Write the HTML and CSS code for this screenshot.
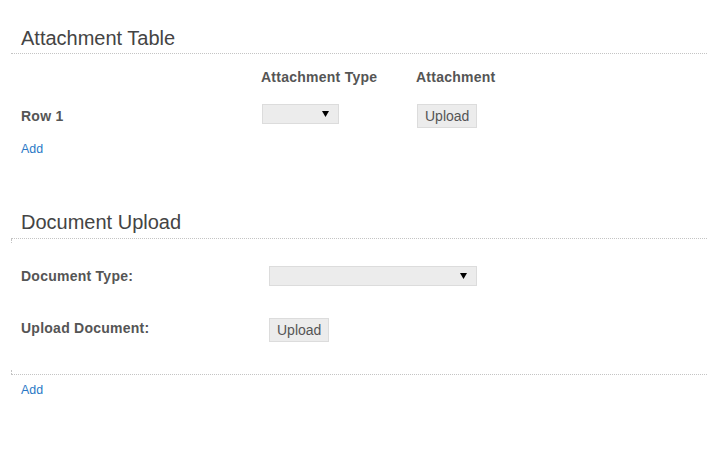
FILE: index.html
```html
<!DOCTYPE html>
<html>
<head>
<meta charset="utf-8">
<link rel="stylesheet" href="styles.css">
</head>
<body>
<div class="page">
  <section class="sec">
    <h2 class="sec-title first">Attachment Table</h2>
    <div class="att">
      <div class="att-row att-head">
        <div class="c-label"></div>
        <div class="c-type">Attachment Type</div>
        <div class="c-file">Attachment</div>
      </div>
      <div class="att-row">
        <div class="c-label">Row 1</div>
        <div class="c-type">
          <span class="sel sel-sm"><svg class="caret" width="7" height="6" viewBox="0 0 7 6"><path d="M0 0H7L3.5 6Z" fill="#000"/></svg></span>
        </div>
        <div class="c-file"><span class="btn">Upload</span></div>
      </div>
    </div>
    <a class="add add-1" href="#">Add</a>
  </section>

  <section class="sec">
    <h2 class="sec-title second">Document Upload</h2>
    <div class="doc">
      <div class="doc-row">
        <div class="doc-label">Document Type:</div>
        <span class="sel sel-lg"><svg class="caret" width="7" height="6" viewBox="0 0 7 6"><path d="M0 0H7L3.5 6Z" fill="#000"/></svg></span>
      </div>
      <div class="doc-row">
        <div class="doc-label">Upload Document:</div>
        <span class="btn">Upload</span>
      </div>
    </div>
    <a class="add add-2" href="#">Add</a>
  </section>
</div>
</body>
</html>
```

FILE: styles.css
```css
html, body {
  margin: 0;
  padding: 0;
  background: #fff;
}
body {
  font-family: "Liberation Sans", Arial, sans-serif;
  color: #555;
}
.page {
  padding-left: 11px;
}
.sec-title {
  margin: 0;
  font-size: 20px;
  line-height: 24px;
  font-weight: normal;
  color: #444;
  padding-left: 10px;
  border-bottom: 1px dotted #c4c4c4;
}
.sec-title.first {
  margin-top: 26px;
  padding-bottom: 3px;
}
.sec-title.second {
  margin-top: 53px;
  padding-bottom: 4px;
}
.att {
  margin-top: 11px;
  padding-left: 10px;
  display: flex;
  flex-direction: column;
  gap: 15px;
}
.att-row {
  display: flex;
  align-items: flex-start;
  height: 24px;
  font-size: 14px;
  line-height: 24px;
  font-weight: bold;
  letter-spacing: 0.25px;
}
.c-label {
  width: 240px;
}
.c-type {
  width: 155px;
}
.att-row .sel {
  margin-left: 1px;
}
.att-row .btn {
  margin-left: 1px;
}
.sel {
  position: relative;
  display: block;
  box-sizing: border-box;
  height: 20px;
  background: #ececec;
  border: 1px solid #dcdcdc;
}
.sel-sm {
  width: 77px;
}
.sel-lg {
  width: 208px;
}
.caret {
  position: absolute;
  right: 9px;
  top: 6px;
}
.btn {
  display: inline-block;
  box-sizing: border-box;
  height: 24px;
  padding: 0 7px;
  background: #ececec;
  border: 1px solid #dcdcdc;
  font-size: 14px;
  line-height: 22px;
  font-weight: normal;
  letter-spacing: 0;
  color: #555;
}
.add {
  display: block;
  width: max-content;
  margin-left: 10px;
  font-size: 12.4px;
  line-height: 16px;
  color: #2a78c6;
  text-decoration: none;
}
.add-1 {
  margin-top: 13px;
}
.add-2 {
  margin-top: 7px;
}
.doc {
  position: relative;
  padding: 27px 0 32px 10px;
  border-bottom: 1px dotted #c4c4c4;
  display: flex;
  flex-direction: column;
  gap: 32px;
}
.doc::before,
.doc::after {
  content: "";
  position: absolute;
  left: 0;
  width: 0;
  height: 4px;
  border-left: 1px dotted #c4c4c4;
}
.doc::before {
  top: 0;
}
.doc::after {
  bottom: 0;
}
.doc-row {
  display: flex;
  align-items: flex-start;
}
.doc-label {
  width: 248px;
  font-size: 14px;
  line-height: 20px;
  font-weight: bold;
  letter-spacing: 0.25px;
  color: #555;
}
```
